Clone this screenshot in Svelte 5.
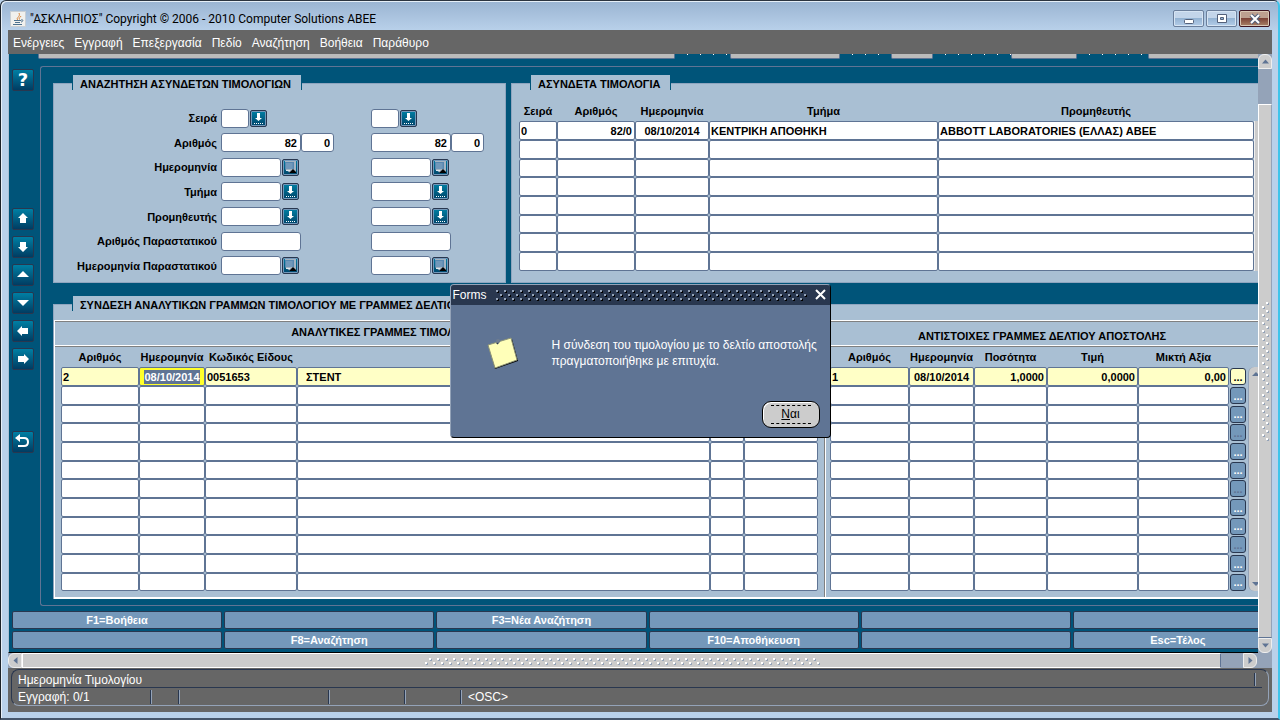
<script>
  const menus = ['Ενέργειες', 'Εγγραφή', 'Επεξεργασία', 'Πεδίο', 'Αναζήτηση', 'Βοήθεια', 'Παράθυρο'];

  const filters = [
    { id: 'series', label: 'Σειρά', size: 'xs', icon: 'list' },
    { id: 'number', label: 'Αριθμός', size: 'md', value: '82', extra: '0' },
    { id: 'date', label: 'Ημερομηνία', size: 'sm', icon: 'calendar' },
    { id: 'dept', label: 'Τμήμα', size: 'sm', icon: 'list' },
    { id: 'supplier', label: 'Προμηθευτής', size: 'sm', icon: 'list' },
    { id: 'docnum', label: 'Αριθμός Παραστατικού', size: 'md' },
    { id: 'docdate', label: 'Ημερομηνία Παραστατικού', size: 'sm', icon: 'calendar' }
  ];

  const invoices = {
    cols: [
      { name: 'Σειρά', cls: 'w38' },
      { name: 'Αριθμός', cls: 'w78', align: 'right' },
      { name: 'Ημερομηνία', cls: 'w74', align: 'center' },
      { name: 'Τμήμα', cls: 'w229' },
      { name: 'Προμηθευτής', cls: 'auto' }
    ],
    first: ['0', '82/0', '08/10/2014', 'ΚΕΝΤΡΙΚΗ ΑΠΟΘΗΚΗ', 'ABBOTT LABORATORIES (ΕΛΛΑΣ) ΑΒΕΕ'],
    rows: 8
  };

  const invoiceLines = {
    cols: [
      { name: 'Αριθμός', cls: 'w78' },
      { name: 'Ημερομηνία', cls: 'w66', align: 'center' },
      { name: 'Κωδικός Είδους', cls: 'w92' },
      { name: '', cls: 'auto', align: 'indent' },
      { name: '', cls: 'w34' },
      { name: '', cls: 'w74' }
    ],
    first: ['2', '08/10/2014', '0051653', 'ΣΤΕΝΤ', '', ''],
    rows: 12,
    current: 1
  };

  const noteLines = {
    cols: [
      { name: 'Αριθμός', cls: 'w79' },
      { name: 'Ημερομηνία', cls: 'w65', align: 'center' },
      { name: 'Ποσότητα', cls: 'w73', align: 'right' },
      { name: 'Τιμή', cls: 'w91', align: 'right' },
      { name: 'Μικτή Αξία', cls: 'w91', align: 'right' }
    ],
    first: ['1', '08/10/2014', '1,0000', '0,0000', '0,00'],
    rows: 12,
    more: true
  };

  const keys = [
    'F1=Βοήθεια', '', 'F3=Νέα Αναζήτηση', '', '', '',
    '', 'F8=Αναζήτηση', '', 'F10=Αποθήκευση', '', 'Esc=Τέλος'
  ];

  const tools = [
    { name: 'Πρώτη', path: 'M11 5l5 5h-2v5H8v-5H6z' },
    { name: 'Τελευταία', path: 'M11 16l5-5h-2V6H8v5H6z' },
    { name: 'Προηγούμενη', path: 'M11 7l6 6H5z' },
    { name: 'Επόμενη', path: 'M11 14l6-6H5z' },
    { name: 'Αριστερά', path: 'M5 11l5-5v2h6v6h-6v2z' },
    { name: 'Δεξιά', path: 'M17 11l-5-5v2H6v6h6v2z' }
  ];

  let open = true;
</script>

{#snippet lookup(icon, label)}
  <button class="lookup" aria-label={label}>
    {#if icon === 'list'}
      <svg width="15" height="15" viewBox="0 0 15 15">
        <path d="M6 2h3v5h2L7.500 10 4 7h2z" fill="#fff" />
        <path d="M3 12.500h10" stroke="#fff" stroke-dasharray="1 1" />
      </svg>
    {:else}
      <svg width="15" height="15" viewBox="0 0 15 15">
        <path d="M2 1h11v12H7l-5-4z" fill="#a5b4c2" />
        <path d="M2 2h9v7H2z" fill="#5687b0" />
        <path d="M3 4h7M3 6h7M3 8h7M4 3v6M6 3v6M8 3v6" stroke="#8fadc8" stroke-width=".6" />
        <path d="M6 13l4-4 3 3v1z" fill="#000" />
        <path d="M3 10h4v1H3z" fill="#dde6ee" />
      </svg>
    {/if}
  </button>
{/snippet}

{#snippet grid(t, title)}
  <table class="grid" class:stretch={!t.more} aria-label={title}>
    <thead>
      <tr>
        {#each t.cols as col}
          <th class={col.cls}>{col.name}</th>
        {/each}
        {#if t.more}<th class="w18"></th>{/if}
      </tr>
    </thead>
    <tbody>
      {#each Array(t.rows) as _, r}
        <tr class:active={r === 0 && t.rows === 12}>
          {#each t.cols as col, c}
            <td>
              {#if r === 0 && c === t.current}
                <div class="cell current"><span>{t.first[c]}</span></div>
              {:else}
                <input
                  class="cell {col.align || ''}"
                  aria-label={col.name || title}
                  value={r === 0 ? t.first[c] : ''}
                />
              {/if}
            </td>
          {/each}
          {#if t.more}
            <td><button class="more" class:dim={r === 3 || r === 6 || r === 9} aria-label="Λεπτομέρειες">...</button></td>
          {/if}
        </tr>
      {/each}
    </tbody>
  </table>
{/snippet}

<div class="window">
  <header class="titlebar">
    <svg width="16" height="16" viewBox="0 0 16 16">
      <rect x=".5" y=".5" width="15" height="15" fill="#f1f1ee" stroke="#c9cfd4" />
      <path d="M8 9c-3-2 3-3 1-7M9.500 8.500c-1-2 1-2 1.500-3.500" fill="none" stroke="#d8853a" />
      <path d="M4 9.500h7M5 11.500h5M11 9c3-1 2 2 0 2M3 13.500h9" fill="none" stroke="#4d728f" />
    </svg>
    <h1>"ΑΣΚΛΗΠΙΟΣ" Copyright © 2006 - 2010 Computer Solutions ΑΒΕΕ</h1>
    <div class="window-buttons">
      <button aria-label="Ελαχιστοποίηση">
        <svg width="12" height="12" viewBox="0 0 12 12"><rect x="1.500" y="6.500" width="9" height="4" rx="1" fill="#fff" stroke="#53607a" /></svg>
      </button>
      <button aria-label="Μεγιστοποίηση">
        <svg width="12" height="12" viewBox="0 0 12 12"><path d="M1.500 1.500h9v8h-9zM4.500 4.500h3v2h-3z" fill="#fff" fill-rule="evenodd" stroke="#53607a" /></svg>
      </button>
      <button class="close" aria-label="Κλείσιμο">
        <svg width="12" height="12" viewBox="0 0 12 12">
          <path d="M2 2l8 8M10 2l-8 8" stroke="#53607a" stroke-width="4" />
          <path d="M2 2l8 8M10 2l-8 8" stroke="#fff" stroke-width="2" />
        </svg>
      </button>
    </div>
  </header>

  <div class="client">
    <nav class="menubar">
      {#each menus as menu}
        <button>{menu}</button>
      {/each}
    </nav>

    <div class="workspace">
      <div class="canvas">
        <div class="cut-row">
          <i class="cut wide"></i><i class="tips"></i>
          <i class="cut mid"></i><i class="tips short"></i>
          <i class="cut small"></i><i class="tips long"></i>
          <i class="cut date"></i><i class="tips last"></i>
          <i class="cut rest"></i>
        </div>

        <div class="main">
          <div class="toolstrip">
            <button class="tool help" aria-label="Βοήθεια">?</button>
            <div class="tool-group">
              {#each tools as tool}
                <button class="tool" aria-label={tool.name}>
                  <svg width="22" height="22" viewBox="0 0 22 22"><path d={tool.path} fill="#fff" /></svg>
                </button>
              {/each}
            </div>
            <button class="tool" aria-label="Επιστροφή">
              <svg width="22" height="22" viewBox="0 0 22 22">
                <path d="M6 7h6q4 0 4 4t-4 4H6" fill="none" stroke="#fff" stroke-width="2" />
                <path d="M3 7l5-4v8z" fill="#fff" />
              </svg>
            </button>
          </div>

          <div class="frame">
            <div class="top-groups">
              <section class="group search">
                <h2>ΑΝΑΖΗΤΗΣΗ ΑΣΥΝΔΕΤΩΝ ΤΙΜΟΛΟΓΙΩΝ</h2>
                <form class="filters">
                  {#each filters as f}
                    <label for={f.id}>{f.label}</label>
                    {#each ['', '-to'] as side}
                      <div class="field">
                        <input id={f.id + side} class={f.size} aria-label={f.label} value={f.value || ''} />
                        {#if f.extra}
                          <input class="suffix" aria-label="{f.label} 2" value={f.extra} />
                        {/if}
                        {#if f.icon}
                          {@render lookup(f.icon, f.label)}
                        {/if}
                      </div>
                    {/each}
                  {/each}
                </form>
              </section>

              <section class="group results">
                <h2>ΑΣΥΝΔΕΤΑ ΤΙΜΟΛΟΓΙΑ</h2>
                <div class="results-body">
                  {@render grid(invoices, 'ΑΣΥΝΔΕΤΑ ΤΙΜΟΛΟΓΙΑ')}
                  <div class="sliver"></div>
                </div>
              </section>
            </div>

            <section class="group link">
              <h2>ΣΥΝΔΕΣΗ ΑΝΑΛΥΤΙΚΩΝ ΓΡΑΜΜΩΝ ΤΙΜΟΛΟΓΙΟΥ ΜΕ ΓΡΑΜΜΕΣ ΔΕΛΤΙΟΥ ΑΠΟΣΤΟΛΗΣ</h2>
              <div class="split">
                <div class="pane left">
                  <h3>ΑΝΑΛΥΤΙΚΕΣ ΓΡΑΜΜΕΣ ΤΙΜΟΛΟΓΙΟΥ</h3>
                  <div class="pane-body">{@render grid(invoiceLines, 'ΑΝΑΛΥΤΙΚΕΣ ΓΡΑΜΜΕΣ ΤΙΜΟΛΟΓΙΟΥ')}</div>
                </div>
                <div class="pane right">
                  <h3>ΑΝΤΙΣΤΟΙΧΕΣ ΓΡΑΜΜΕΣ ΔΕΛΤΙΟΥ ΑΠΟΣΤΟΛΗΣ</h3>
                  <div class="pane-body">
                    {@render grid(noteLines, 'ΑΝΤΙΣΤΟΙΧΕΣ ΓΡΑΜΜΕΣ ΔΕΛΤΙΟΥ ΑΠΟΣΤΟΛΗΣ')}
                    <div class="mini-scroll">
                      <svg width="14" height="14" viewBox="0 0 14 14"><path d="M7 5l4 4H3z" fill="#5f7494" /></svg>
                      <svg width="14" height="14" viewBox="0 0 14 14"><path d="M7 9l4-4H3z" fill="#5f7494" /></svg>
                    </div>
                  </div>
                </div>
              </div>
            </section>
          </div>
        </div>

        <div class="keys">
          {#each keys as key}
            <button>{key}</button>
          {/each}
        </div>
      </div>

      <div class="vscroll">
        <button class="arrow up" aria-label="Πάνω">
          <svg width="13" height="13" viewBox="0 0 13 13"><path d="M6.500 4.500l3.500 4H3z" fill="#5f7494" /></svg>
        </button>
        <div class="vthumb"><span class="vgrip"></span></div>
        <button class="arrow down" aria-label="Κάτω">
          <svg width="13" height="13" viewBox="0 0 13 13"><path d="M6.500 8.500l3.500-4H3z" fill="#5f7494" /></svg>
        </button>
      </div>
    </div>

    <div class="hscroll">
      <button class="arrow prev" aria-label="Αριστερά">
        <svg width="13" height="13" viewBox="0 0 13 13"><path d="M4.500 6.500l4-3.500v7z" fill="#5f7494" /></svg>
      </button>
      <div class="hthumb"><span class="hgrip"></span></div>
      <button class="arrow next" aria-label="Δεξιά">
        <svg width="13" height="13" viewBox="0 0 13 13"><path d="M8.500 6.500l-4-3.500v7z" fill="#5f7494" /></svg>
      </button>
    </div>

    <footer class="status">
      <div class="status-box">
        <div class="status-line hint"><span>Ημερομηνία Τιμολογίου</span></div>
        <div class="status-line">
          <span class="s1">Εγγραφή: 0/1</span>
          <span class="s2"></span>
          <span class="s3"></span>
          <span class="s4"></span>
          <span class="s5"></span>
          <span class="s6">&lt;OSC&gt;</span>
        </div>
      </div>
    </footer>
  </div>

  {#if open}
    <div class="dialog" role="dialog" aria-labelledby="dialog-title">
      <div class="dialog-title">
        <span id="dialog-title">Forms</span>
        <span class="dialog-grip"></span>
        <button aria-label="Κλείσιμο" on:click={() => (open = false)}>
          <svg width="11" height="11" viewBox="0 0 11 11"><path d="M1 1l9 9M10 1l-9 9" stroke="#fff" stroke-width="2" /></svg>
        </button>
      </div>
      <div class="dialog-body">
        <svg width="34" height="34" viewBox="0 0 34 34">
          <path d="M3 9l23-7 6 22-23 8z" fill="#000" />
          <path d="M2 8l23-7 6 22-22 8z" fill="#ffffb9" stroke="#8d9377" />
          <path d="M13 4l-2 3" stroke="#29374f" stroke-width="2" />
          <circle cx="12" cy="4" r="2" fill="#6f7d90" />
        </svg>
        <p>Η σύνδεση του τιμολογίου με το δελτίο αποστολής πραγματοποιήθηκε με επιτυχία.</p>
      </div>
      <div class="dialog-actions">
        <button on:click={() => (open = false)}><span><u>Ν</u>αι</span></button>
      </div>
    </div>
  {/if}
</div>

<style>
  :global(body) {
    background: #b9d1ea;
  }

  .window {
    --sea: #005479;
    --panel: #a9bfd3;
    --line: #5f7494;
    --navy: #29374f;
    --steel: #7498ba;
    position: relative;
    box-sizing: border-box;
    min-height: 100vh;
    padding: 0 6px 6px 7px;
    border-top: 1px solid #2b3440;
    border-left: 1px solid #1c2229;
    border-right: 2px solid #3fc4ea;
    border-bottom: 2px solid #46566b;
    border-radius: 6px 6px 0 0;
    background: linear-gradient(#9ab4d2, #b9d1ea 30px);
    box-shadow: inset 1px 1px #e6eff8;
    font: 12px/16px "Liberation Sans", Arial, sans-serif;
    overflow: hidden;
  }

  .window * {
    box-sizing: border-box;
  }

  button,
  input {
    margin: 0;
    padding: 0;
    border: 0;
    border-radius: 0;
    font: inherit;
    color: inherit;
  }

  svg {
    display: block;
    flex: none;
  }

  h1,
  h2,
  h3,
  p {
    margin: 0;
  }

  .titlebar {
    display: flex;
    align-items: center;
    gap: 4px;
    height: 29px;
    padding: 6px 2px 0;
  }

  .titlebar h1 {
    flex: 1;
    font: 12px/16px Roboto, "Noto Sans", sans-serif;
    color: #000;
  }

  .window-buttons {
    display: flex;
    gap: 2px;
  }

  .window-buttons button {
    display: grid;
    place-items: center;
    width: 31px;
    height: 17px;
    border: 1px solid #6b7f9c;
    border-radius: 2px;
    background: linear-gradient(#c3d5ea 50%, #94b3d3 50%, #b4cde8);
    box-shadow: inset 0 0 0 1px #d6e4f3;
  }

  .window-buttons .close {
    border-color: #3d1420;
    background: linear-gradient(#bda08f 50%, #7d4437 50%, #a98369);
    box-shadow: inset 0 0 0 1px #d9c7b4;
  }

  .menubar {
    display: flex;
    gap: 10px;
    height: 24px;
    padding: 1px 5px 0;
    background: #666;
    color: #fff;
  }

  .menubar button {
    background: none;
  }

  .workspace {
    display: flex;
    background: var(--sea);
  }

  .canvas {
    flex: 1;
    min-width: 0;
    border-left: 1px solid var(--panel);
    border-bottom: 1px solid #000;
    background: var(--sea);
    overflow: hidden;
  }

  .cut-row {
    display: flex;
    height: 5px;
    margin: 0 0 7px 29px;
  }

  .cut {
    border: 1px solid var(--line);
    border-top: 0;
    border-radius: 0 0 2px 2px;
    background: #bbb;
  }

  .cut.wide { flex: 1; }
  .cut.mid { width: 110px; }
  .cut.small { width: 42px; }
  .cut.date { width: 66px; }
  .cut.rest { width: 112px; margin-right: -2px; }

  .tips {
    width: 55px;
    height: 1px;
    background: repeating-linear-gradient(90deg, transparent 0 12px, #fff 12px 13px);
  }

  .tips.short { width: 51px; }
  .tips.long { width: 78px; }
  .tips.last { width: 71px; }

  .main {
    display: flex;
  }

  .toolstrip {
    display: flex;
    flex-direction: column;
    width: 31px;
    padding: 3px 0 0 3px;
  }

  .tool-group {
    display: flex;
    flex-direction: column;
    gap: 6px;
    margin: 117px 0 61px;
  }

  .tool {
    width: 22px;
    height: 22px;
    border: 1px solid var(--navy);
    border-radius: 2px;
    background: linear-gradient(#007fa3, #003c62);
    color: #fff;
  }

  .tool svg {
    margin: -1px;
  }

  .tool.help {
    font: bold 18px/18px "DejaVu Sans", sans-serif;
  }

  .frame {
    flex: 1;
    min-width: 0;
    padding: 16px 0 6px 12px;
    border: 1px solid var(--line);
    border-right: 0;
    border-radius: 3px 0 0 3px;
  }

  .top-groups {
    display: flex;
    gap: 5px;
    margin-bottom: 21px;
  }

  .group {
    position: relative;
    border: 1px solid #8fa5bf;
    background: var(--panel);
    font-weight: bold;
    font-size: 11px;
  }

  .group h2 {
    position: absolute;
    top: -9px;
    left: 19px;
    padding: 2px 10px 0 7px;
    background: var(--panel);
    font-size: 11px;
    line-height: 15px;
    white-space: nowrap;
  }

  .group h2::before,
  .group h2::after {
    content: "";
    position: absolute;
    top: 0;
    left: -1px;
    width: 1px;
    height: 15px;
    background: var(--sea);
  }

  .group h2::after {
    left: 100%;
  }

  .search {
    width: 453px;
  }

  .filters {
    display: grid;
    grid-template-columns: 163px 146px 1fr;
    grid-template-rows: repeat(7, 1fr);
    column-gap: 4px;
    align-items: center;
    height: 172px;
    margin: 22px 0 4px;
  }

  .filters label {
    text-align: right;
    white-space: nowrap;
  }

  .field {
    display: flex;
    align-items: center;
  }

  .field input {
    height: 19px;
    padding: 0 3px;
    border: 1px solid var(--line);
    border-radius: 3px;
    background: #fff;
    text-align: right;
  }

  .field .xs { width: 28px; }
  .field .sm { width: 60px; }
  .field .md { width: 80px; }
  .field .suffix { width: 33px; }

  .lookup {
    width: 17px;
    height: 17px;
    margin-left: 1px;
    border: 1px solid var(--navy);
    border-radius: 2px;
    background: linear-gradient(#007fa3, #00446a);
    box-shadow: inset 0 0 0 1px var(--steel);
  }

  .results {
    flex: 1;
    min-width: 0;
    border-right: 0;
  }

  .results-body {
    display: flex;
    padding: 17px 0 0 7px;
  }

  .sliver {
    width: 4px;
    margin-top: 20px;
    border-left: 1px solid #eee;
    background: #ccc;
  }

  .grid {
    border-collapse: collapse;
    table-layout: fixed;
    width: 417px;
  }

  .grid.stretch {
    flex: 1;
    width: 100%;
    min-width: 0;
  }

  .grid th {
    height: 20px;
    padding: 0;
    font-size: 11px;
    line-height: 16px;
    white-space: nowrap;
  }

  .grid td {
    padding: 0;
  }

  .w18 { width: 18px; }
  .w34 { width: 34px; }
  .w38 { width: 38px; }
  .w65 { width: 65px; }
  .w66 { width: 66px; }
  .w73 { width: 73px; }
  .w74 { width: 74px; }
  .w78 { width: 78px; }
  .w79 { width: 79px; }
  .w91 { width: 91px; }
  .w92 { width: 92px; }
  .w229 { width: 229px; }

  .cell {
    display: block;
    width: 100%;
    height: 19px;
    padding: 0 1px;
    border: 1px solid var(--line);
    border-radius: 2px;
    background: #fff;
  }

  tr:nth-child(3n) .cell {
    height: 18px;
  }

  .cell.right {
    padding-right: 2px;
    text-align: right;
  }

  .cell.center {
    text-align: center;
  }

  .cell.indent {
    padding-left: 8px;
  }

  .active .cell {
    background: #ffffc6;
  }

  .active .current {
    display: flex;
    justify-content: center;
    align-items: center;
    padding: 0;
    background: #ffff2a;
    line-height: 14px;
    color: #fff;
  }

  .current span {
    background: var(--line);
  }

  .more {
    display: block;
    width: 16px;
    height: 17px;
    margin-left: 1px;
    border: 1px solid var(--navy);
    border-radius: 3px;
    background: var(--steel);
    line-height: 14px;
    color: #fff;
  }

  .more.dim {
    color: var(--line);
  }

  .active .more {
    background: #ffffc6;
    color: #000;
  }

  .link {
    border-right: 0;
    border-bottom: 0;
    padding-top: 15px;
  }

  .split {
    display: flex;
    border-left: 1px solid #fff;
    border-bottom: 2px solid #fff;
  }

  .pane.left {
    flex: 1;
    min-width: 0;
    border-right: 1px solid #808080;
  }

  .pane.right {
    flex: none;
    width: 433px;
    border-left: 1px solid #fff;
  }

  .pane h3 {
    border-top: 1px solid #fff;
    border-bottom: 1px solid #fff;
    box-shadow: inset 0 1px #808080, 0 1px #808080;
    height: 26px;
    font-size: 11px;
    line-height: 22px;
    text-align: center;
  }

  .pane.left h3 {
    padding-right: 100px;
  }

  .pane.right h3 {
    line-height: 30px;
  }

  .pane-body {
    display: flex;
    padding: 1px 6px 6px;
  }

  .pane.right .pane-body {
    padding: 1px 0 6px 4px;
  }

  .mini-scroll {
    display: flex;
    flex-direction: column;
    justify-content: space-between;
    flex: 1;
    min-width: 0;
    margin: 20px 0 0 1px;
    border-left: 1px solid #94a3b8;
    border-radius: 6px 0 0 6px;
    background: #ccc;
    overflow: hidden;
  }

  .keys {
    display: grid;
    grid-template-columns: repeat(6, 1fr);
    gap: 2px;
    margin: 5px -25px 3px 3px;
  }

  .keys button {
    height: 18px;
    border: 1px solid var(--navy);
    border-radius: 2px;
    background: var(--steel);
    font-weight: bold;
    font-size: 11px;
    line-height: 16px;
    color: #fff;
  }

  .vscroll {
    display: flex;
    flex-direction: column;
    width: 14px;
    background: #94a3b8;
  }

  .arrow {
    display: grid;
    place-items: center;
    width: 14px;
    height: 15px;
    border: 1px solid #eee;
    background: #ccc;
  }

  .arrow.up { border-radius: 6px 6px 0 0; }
  .arrow.down { border-radius: 0 0 6px 6px; }
  .arrow.prev { border-radius: 6px 0 0 6px; }
  .arrow.next { border-radius: 0 6px 6px 0; margin-right: 15px; }

  .vthumb {
    display: grid;
    place-items: center;
    flex: 1;
    margin-top: 35px;
    border: 1px solid #fff;
    border-right-color: #94a3b8;
    border-bottom-color: #5f7494;
    background: #ccc;
  }

  .vgrip,
  .hgrip {
    background:
      conic-gradient(#fff 0 0) 1px 1px / 8px 8px,
      #ccc;
    background:
      radial-gradient(circle at 2px 6px, #fff 1px, transparent 1px) 0 0 / 8px 8px,
      radial-gradient(circle at 3px 7px, #94a3b8 1px, transparent 1px) 0 0 / 8px 8px,
      radial-gradient(circle at 6px 2px, #fff 1px, transparent 1px) 0 0 / 8px 8px,
      radial-gradient(circle at 7px 3px, #94a3b8 1px, transparent 1px) 0 0 / 8px 8px;
  }

  .vgrip {
    width: 8px;
    height: 140px;
  }

  .hscroll {
    display: flex;
    height: 15px;
    background: #94a3b8;
  }

  .hthumb {
    display: grid;
    place-items: center;
    flex: 1;
    margin-right: 22px;
    border: 1px solid #fff;
    border-right-color: #5f7494;
    background: #ccc;
  }

  .hgrip {
    width: 396px;
    height: 8px;
  }

  .status {
    padding: 1px 3px 6px;
    background: #666;
    color: #fff;
  }

  .status-box {
    padding: 1px 6px 0;
    border: 1px solid #94a3b8;
    border-top-color: var(--navy);
    border-left-color: var(--navy);
    border-radius: 8px;
  }

  .status-line {
    display: flex;
    height: 17px;
    line-height: 18px;
  }

  .hint {
    padding-right: 7px;
    border-bottom: 1px solid var(--navy);
  }

  .hint span {
    flex: 1;
    border-right: 1px solid #94a3b8;
    box-shadow: 1px 0 var(--navy);
  }

  .status-line > span[class] {
    border-right: 1px solid var(--navy);
    box-shadow: 1px 0 #94a3b8;
    margin: 2px 0 1px;
    line-height: 14px;
  }

  .s1 { width: 133px; }
  .s2 { width: 28px; }
  .s3 { width: 150px; }
  .s4 { width: 76px; }
  .s5 { width: 56px; }

  .status-line > span.s6 {
    padding-left: 7px;
    border: 0;
    box-shadow: none;
  }

  .dialog {
    position: absolute;
    top: 50%;
    left: 50%;
    width: 381px;
    margin: -76px 0 0 -190px;
    border: 1px solid #000;
    border-top-color: #94a3b8;
    border-left-color: #94a3b8;
    border-radius: 4px;
    background: var(--line);
    color: #fff;
    overflow: hidden;
  }

  .dialog-title {
    display: flex;
    align-items: center;
    gap: 8px;
    height: 20px;
    padding: 0 4px 0 2px;
    background: var(--navy);
  }

  .dialog-title button {
    background: none;
  }

  .dialog-grip {
    flex: 1;
    height: 12px;
    background:
      radial-gradient(circle at 2px 2px, #94a3b8 1px, transparent 1px) 0 0 / 8px 8px,
      radial-gradient(circle at 3px 3px, #000 1px, transparent 1px) 0 0 / 8px 8px,
      radial-gradient(circle at 6px 6px, #94a3b8 1px, transparent 1px) 0 0 / 8px 8px,
      radial-gradient(circle at 7px 7px, #000 1px, transparent 1px) 0 0 / 8px 8px;
  }

  .dialog-body {
    display: flex;
    gap: 32px;
    padding: 32px 10px 0 35px;
  }

  .dialog-body p {
    flex: 1;
  }

  .dialog-actions {
    display: flex;
    justify-content: flex-end;
    padding: 30px 10px 9px;
  }

  .dialog-actions button {
    width: 58px;
    height: 27px;
    padding: 3px 8px;
    border: 1px solid #000;
    border-radius: 9px;
    background: #ccc;
    box-shadow: inset 1px 1px #fff;
    color: #000;
  }

  .dialog-actions span {
    display: block;
    border-top: 1px dashed #000;
    border-bottom: 1px dashed #000;
    line-height: 17px;
  }
</style>
